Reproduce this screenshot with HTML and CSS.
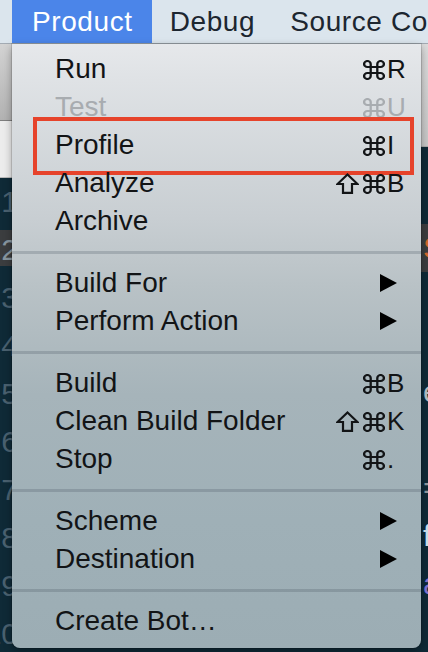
FILE: index.html
```html
<!DOCTYPE html>
<html lang="en">
<head>
<meta charset="utf-8">
<title>Product menu</title>
<link rel="stylesheet" href="styles.css">
</head>
<body>
<header class="menubar">
  <span class="mb-item active">Product</span>
  <span class="mb-item">Debug</span>
  <span class="mb-item">Source Control</span>
</header>
<main class="workspace">
  <section class="pane pane-left">
    <div class="toolbar"></div>
    <div class="jumpbar"></div>
    <div class="editor">
      <ol class="gutter">
        <li>1</li>
        <li class="current">2</li>
        <li>3</li>
        <li>4</li>
        <li>5</li>
        <li>6</li>
        <li>7</li>
        <li>8</li>
        <li>9</li>
        <li>10</li>
      </ol>
    </div>
  </section>
  <section class="pane pane-right">
    <div class="toolbar toolbar-tall"></div>
    <div class="editor editor-right">
      <div class="code-line"></div>
      <div class="code-line current"><span class="tok-orange">S</span></div>
      <div class="code-line"></div>
      <div class="code-line"></div>
      <div class="code-line"><span class="tok-plain">e</span></div>
      <div class="code-line"></div>
      <div class="code-line"><span class="tok-dim">=</span></div>
      <div class="code-line"><span class="tok-light">f</span></div>
      <div class="code-line"><span class="tok-purple">a</span></div>
    </div>
  </section>

  <nav class="dropdown">
    <div class="item">
      <span class="label">Run</span>
      <span class="sc"><span class="mods"><svg class="cmd" viewBox="2 2 20 20" width="22" height="20" preserveAspectRatio="none"><path d="M15 6v12a3 3 0 1 0 3-3H6a3 3 0 1 0 3 3V6a3 3 0 1 0-3 3h12a3 3 0 1 0-3-3z"/></svg></span><span class="key">R</span></span>
    </div>
    <div class="item disabled">
      <span class="label">Test</span>
      <span class="sc"><span class="mods"><svg class="cmd" viewBox="2 2 20 20" width="22" height="20" preserveAspectRatio="none"><path d="M15 6v12a3 3 0 1 0 3-3H6a3 3 0 1 0 3 3V6a3 3 0 1 0-3 3h12a3 3 0 1 0-3-3z"/></svg></span><span class="key">U</span></span>
    </div>
    <div class="item marked">
      <span class="label">Profile</span>
      <span class="sc"><span class="mods"><svg class="cmd" viewBox="2 2 20 20" width="22" height="20" preserveAspectRatio="none"><path d="M15 6v12a3 3 0 1 0 3-3H6a3 3 0 1 0 3 3V6a3 3 0 1 0-3 3h12a3 3 0 1 0-3-3z"/></svg></span><span class="key">I</span></span>
    </div>
    <div class="item">
      <span class="label">Analyze</span>
      <span class="sc"><span class="mods"><svg class="shift" viewBox="0 0 23 21" width="23" height="21"><polygon points="11.5,1.5 21.5,11 16,11 16,19.8 7,19.8 7,11 1.5,11"/></svg><svg class="cmd" viewBox="2 2 20 20" width="22" height="20" preserveAspectRatio="none"><path d="M15 6v12a3 3 0 1 0 3-3H6a3 3 0 1 0 3 3V6a3 3 0 1 0-3 3h12a3 3 0 1 0-3-3z"/></svg></span><span class="key">B</span></span>
    </div>
    <div class="item"><span class="label">Archive</span></div>
    <div class="sep"></div>
    <div class="item"><span class="label">Build For</span><svg class="arrow" viewBox="0 0 17 18" width="17" height="18"><polygon points="0,0 17,9 0,18"/></svg></div>
    <div class="item"><span class="label">Perform Action</span><svg class="arrow" viewBox="0 0 17 18" width="17" height="18"><polygon points="0,0 17,9 0,18"/></svg></div>
    <div class="sep"></div>
    <div class="item">
      <span class="label">Build</span>
      <span class="sc"><span class="mods"><svg class="cmd" viewBox="2 2 20 20" width="22" height="20" preserveAspectRatio="none"><path d="M15 6v12a3 3 0 1 0 3-3H6a3 3 0 1 0 3 3V6a3 3 0 1 0-3 3h12a3 3 0 1 0-3-3z"/></svg></span><span class="key">B</span></span>
    </div>
    <div class="item">
      <span class="label">Clean Build Folder</span>
      <span class="sc"><span class="mods"><svg class="shift" viewBox="0 0 23 21" width="23" height="21"><polygon points="11.5,1.5 21.5,11 16,11 16,19.8 7,19.8 7,11 1.5,11"/></svg><svg class="cmd" viewBox="2 2 20 20" width="22" height="20" preserveAspectRatio="none"><path d="M15 6v12a3 3 0 1 0 3-3H6a3 3 0 1 0 3 3V6a3 3 0 1 0-3 3h12a3 3 0 1 0-3-3z"/></svg></span><span class="key">K</span></span>
    </div>
    <div class="item">
      <span class="label">Stop</span>
      <span class="sc"><span class="mods"><svg class="cmd" viewBox="2 2 20 20" width="22" height="20" preserveAspectRatio="none"><path d="M15 6v12a3 3 0 1 0 3-3H6a3 3 0 1 0 3 3V6a3 3 0 1 0-3 3h12a3 3 0 1 0-3-3z"/></svg></span><span class="key">.</span></span>
    </div>
    <div class="sep"></div>
    <div class="item"><span class="label">Scheme</span><svg class="arrow" viewBox="0 0 17 18" width="17" height="18"><polygon points="0,0 17,9 0,18"/></svg></div>
    <div class="item"><span class="label">Destination</span><svg class="arrow" viewBox="0 0 17 18" width="17" height="18"><polygon points="0,0 17,9 0,18"/></svg></div>
    <div class="sep"></div>
    <div class="item"><span class="label">Create Bot…</span></div>
  </nav>
</main>
</body>
</html>
```

FILE: styles.css
```css
* { box-sizing: border-box; }

html, body {
  margin: 0;
  padding: 0;
}

body {
  width: 428px;
  height: 652px;
  overflow: hidden;
  font-family: "Liberation Sans", Arial, sans-serif;
  background: #0f2a37;
}

/* ---------- menu bar ---------- */
.menubar {
  display: flex;
  height: 44px;
  padding-left: 12px;
  background: #dbe5ed;
  border-bottom: 1px solid #a3abb3;
  white-space: nowrap;
  overflow: hidden;
}

.mb-item {
  display: block;
  height: 43px;
  line-height: 43px;
  padding: 0 17px 0 18px;
  font-size: 28px;
  letter-spacing: 0.6px;
  color: #1c2630;
  flex: none;
}

.mb-item.active {
  padding: 0 19px 0 20px;
  background: #4b85e9;
  color: #ffffff;
}

/* ---------- workspace behind the menu ---------- */
.workspace {
  position: relative;
  display: flex;
  height: 608px;
}

.pane {
  flex: 1 1 0;
  display: flex;
  flex-direction: column;
  overflow: hidden;
}

.toolbar {
  height: 77px;
  flex: none;
  background: linear-gradient(#d3d3d3, #b2b2b2);
  border-bottom: 1px solid #7e7e7e;
}

.toolbar-tall {
  height: 103px;
  background: linear-gradient(#dcdcdc, #c6c6c6);
  border-bottom: 1px solid #a9a9a9;
}

.jumpbar {
  height: 57px;
  flex: none;
  background: #ececec;
  border-bottom: 1px solid #b9b9b9;
}

.editor {
  flex: 1;
  background: #0f2a37;
}

.gutter {
  list-style: none;
  margin: 0 0 0 -42px;
  padding: 0;
  width: 60px;
  text-align: right;
  font-size: 30px;
  color: #4a6170;
}

.gutter li {
  height: 48px;
  line-height: 48px;
}

.gutter li.current {
  background: linear-gradient(#0f2a37 0, #0f2a37 4px, #3b3d3f 4px, #3b3d3f 40px, #0f2a37 40px);
  color: #8796a0;
}

.editor-right {
  padding-top: 29px;
  font-size: 30px;
}

.code-line {
  height: 48px;
  line-height: 48px;
  padding-left: 209px;
}

.code-line.current {
  background: #3b3d3f;
}

.tok-orange { color: #d4682c; }
.tok-plain  { color: #b7c0c6; }
.tok-dim    { color: #8e9aa1; }
.tok-light  { color: #cfe3f0; }
.tok-purple { color: #8175d6; }

/* ---------- dropdown menu ---------- */
.dropdown {
  position: absolute;
  top: 0;
  left: 12px;
  width: 409px;
  height: 604px;
  padding-top: 6px;
  border-radius: 0 0 8px 8px;
  background: linear-gradient(to bottom,
    #e6e8eb 0%,
    #e0e3e6 5%,
    #c8ced2 29%,
    #b9c2c6 40%,
    #a6b4ba 58%,
    #9fb0b7 79%,
    #9cadb4 100%);
  box-shadow: 0 3px 8px rgba(0, 0, 0, 0.35), 0 0 0 1px rgba(0, 0, 0, 0.12);
  font-size: 28px;
  color: #121416;
}

.item {
  position: relative;
  display: flex;
  align-items: center;
  height: 38px;
  padding: 0 18px 0 43px;
  white-space: nowrap;
}

.label {
  flex: 1;
}

.item.disabled {
  color: #a8acb0;
}

.item.marked::after {
  content: "";
  position: absolute;
  top: -9px;
  left: 21px;
  right: 7px;
  height: 50px;
  border: 4px solid #e6432b;
}

.sc {
  display: flex;
  align-items: center;
}

.mods {
  display: flex;
  align-items: center;
  gap: 4px;
}

.cmd, .shift {
  display: block;
  fill: none;
  stroke: currentColor;
  stroke-linejoin: miter;
}

.cmd {
  stroke-width: 2.1;
  margin-top: 1px;
}

.shift {
  stroke-width: 2.2;
}

.key {
  width: 18px;
  padding-left: 2px;
  font-size: 26px;
}

.arrow {
  display: block;
  margin-right: 6px;
  fill: #000000;
}

.sep {
  height: 24px;
  display: flex;
  align-items: center;
}

.sep::before {
  content: "";
  display: block;
  width: 100%;
  height: 3px;
  background: rgba(70, 85, 95, 0.25);
}
```
